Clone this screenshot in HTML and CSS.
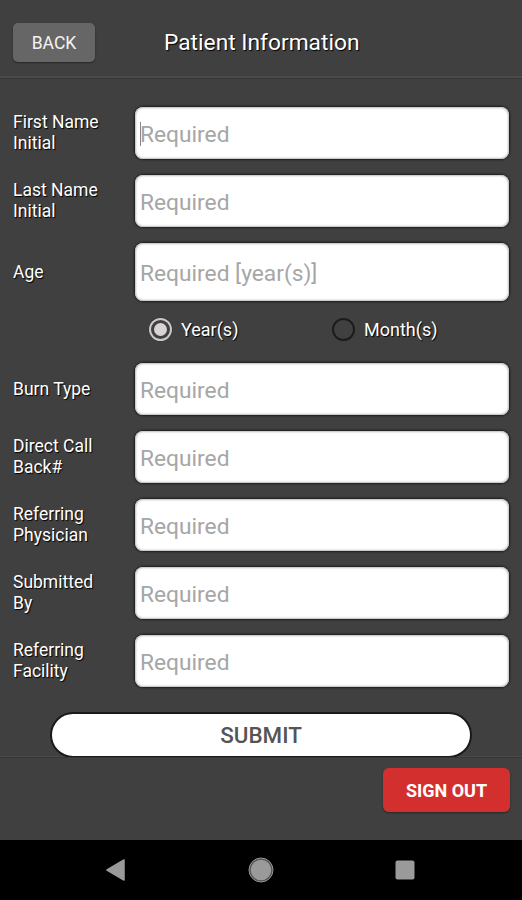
FILE: index.html
```html
<!DOCTYPE html>
<html>
<head>
<meta charset="utf-8">
<link rel="stylesheet" href="styles.css">
</head>
<body>
<div class="screen">
  <header class="header">
    <button class="back-btn">BACK</button>
    <h1 class="title">Patient Information</h1>
  </header>
  <main class="content">
    <div class="form">
      <div class="field">
        <label class="label">First Name<br>Initial</label>
        <div class="input"><span class="caret"></span><span class="ph">Required</span></div>
      </div>
      <div class="field">
        <label class="label">Last Name<br>Initial</label>
        <div class="input"><span class="ph">Required</span></div>
      </div>
      <div class="field field-age">
        <label class="label">Age</label>
        <div class="input input-tall"><span class="ph">Required [year(s)]</span></div>
      </div>
      <div class="radios">
        <div class="radio-opt opt-year"><span class="radio checked"></span><span class="radio-label">Year(s)</span></div>
        <div class="radio-opt opt-month"><span class="radio"></span><span class="radio-label">Month(s)</span></div>
      </div>
      <div class="field">
        <label class="label">Burn Type</label>
        <div class="input"><span class="ph">Required</span></div>
      </div>
      <div class="field">
        <label class="label">Direct Call<br>Back#</label>
        <div class="input"><span class="ph">Required</span></div>
      </div>
      <div class="field">
        <label class="label">Referring<br>Physician</label>
        <div class="input"><span class="ph">Required</span></div>
      </div>
      <div class="field">
        <label class="label">Submitted<br>By</label>
        <div class="input"><span class="ph">Required</span></div>
      </div>
      <div class="field">
        <label class="label">Referring<br>Facility</label>
        <div class="input"><span class="ph">Required</span></div>
      </div>
      <div class="submit-wrap">
        <button class="submit">SUBMIT</button>
      </div>
    </div>
  </main>
  <footer class="footer">
    <button class="signout">SIGN OUT</button>
  </footer>
  <nav class="navbar">
    <svg class="nav-icon" width="22" height="22" viewBox="0 0 22 22"><path d="M19 1 L19 21 L2 11 Z" fill="#9a9a9a" stroke="#9a9a9a" stroke-width="1.5" stroke-linejoin="round"/></svg>
    <svg class="nav-icon" width="26" height="26" viewBox="0 0 26 26"><circle cx="13" cy="13" r="11" fill="#9a9a9a" stroke="#555" stroke-width="1.5"/><circle cx="13" cy="13" r="12" fill="none" stroke="#9a9a9a" stroke-width="1"/></svg>
    <svg class="nav-icon" width="22" height="22" viewBox="0 0 22 22"><rect x="1.5" y="1.5" width="19" height="19" rx="2" fill="#9a9a9a"/></svg>
  </nav>
</div>
</body>
</html>
```
FILE: styles.css
```css
* { box-sizing: border-box; }
html, body { margin: 0; padding: 0; }
body {
  background: #404040;
  font-family: Roboto, "Noto Sans", "Liberation Sans", sans-serif;
  color: #fff;
}
.screen {
  width: 522px;
  height: 900px;
  display: flex;
  flex-direction: column;
  background: #404040;
}
.header {
  height: 79px;
  flex: 0 0 79px;
  display: flex;
  align-items: center;
  padding: 7px 0 0 13px;
  border-bottom: 1px solid #363636;
  box-shadow: inset 0 -2px 0 #4a4a4a;
}
.back-btn {
  width: 82px;
  height: 39px;
  background: #666;
  border: none;
  border-radius: 5px;
  color: #f2f2f2;
  font-family: inherit;
  font-size: 17.5px;
  padding: 0;
  box-shadow: 0 1px 2px rgba(0,0,0,0.4);
}
.title {
  margin: 0 0 0 69px;
  font-size: 22.75px;
  font-weight: 400;
  color: #fff;
  text-shadow: 1px 1px 1px #000;
}
.content {
  flex: 1 1 auto;
  overflow: hidden;
  border-bottom: 1px solid #363636;
  box-shadow: inset 0 -1px 0 #4a4a4a;
}
.form {
  padding: 28px 13px 0 13px;
  display: flex;
  flex-direction: column;
}
.field {
  display: flex;
  align-items: center;
  margin-bottom: 16px;
}
.label {
  width: 122px;
  flex: 0 0 122px;
  font-size: 17.5px;
  line-height: 21px;
  color: #fff;
  text-shadow: 1px 1px 1px #000;
}
.input {
  width: 374px;
  height: 52px;
  background: #fff;
  border-radius: 8px;
  box-shadow: 0 0 2px 1px #1c1c1c, inset 0 0 2px 1px #bbb;
  display: flex;
  align-items: center;
  padding-left: 5px;
  position: relative;
}
.input-tall { height: 58px; }
.field-age { margin-bottom: 12px; }
.ph {
  font-size: 22.75px;
  color: #a6a6a6;
  padding-top: 2px;
}
.caret {
  position: absolute;
  left: 5px;
  top: 15px;
  width: 1px;
  height: 24px;
  background: #888;
}
.radios {
  display: flex;
  align-items: center;
  height: 32px;
  margin: 0 0 18px 135px;
}
.radio-opt {
  display: flex;
  align-items: center;
  gap: 9px;
}
.opt-year { width: 184px; padding-left: 1px; }
.radio {
  width: 23px;
  height: 23px;
  border-radius: 50%;
  border: 2px solid #1c1c1c;
  display: inline-block;
  position: relative;
}
.radio.checked {
  border: 2px solid #c8c8c8;
  box-shadow: 0 0 1px #000;
}
.radio.checked::after {
  content: "";
  position: absolute;
  left: 3px;
  top: 3px;
  width: 13px;
  height: 13px;
  border-radius: 50%;
  background: #d9d2d2;
}
.radio-label {
  font-size: 18px;
  color: #fff;
  text-shadow: 1px 1px 1px #000;
}
.submit-wrap {
  display: flex;
  justify-content: center;
  padding-top: 9px;
  margin-left: -13px;
  margin-right: -13px;
}
.submit {
  width: 422px;
  height: 46px;
  background: #fff;
  border: 2px solid #1a1a1a;
  border-radius: 23px;
  color: #555;
  font-family: inherit;
  font-size: 22.4px;
  font-weight: 500;
  padding: 0;
}
.footer {
  flex: 0 0 82px;
  display: flex;
  justify-content: flex-end;
  align-items: flex-start;
  padding: 10px 12px 0 0;
}
.signout {
  width: 127px;
  height: 44px;
  background: #d32f2f;
  border: none;
  border-radius: 6px;
  color: #fff;
  font-family: inherit;
  font-size: 18px;
  font-weight: 700;
  padding: 0;
  box-shadow: 0 1px 2px rgba(0,0,0,0.4);
}
.navbar {
  flex: 0 0 60px;
  background: #000;
  display: flex;
  align-items: center;
  justify-content: space-between;
  padding: 0 106px 0 105px;
}
.nav-icon { display: block; }
```
